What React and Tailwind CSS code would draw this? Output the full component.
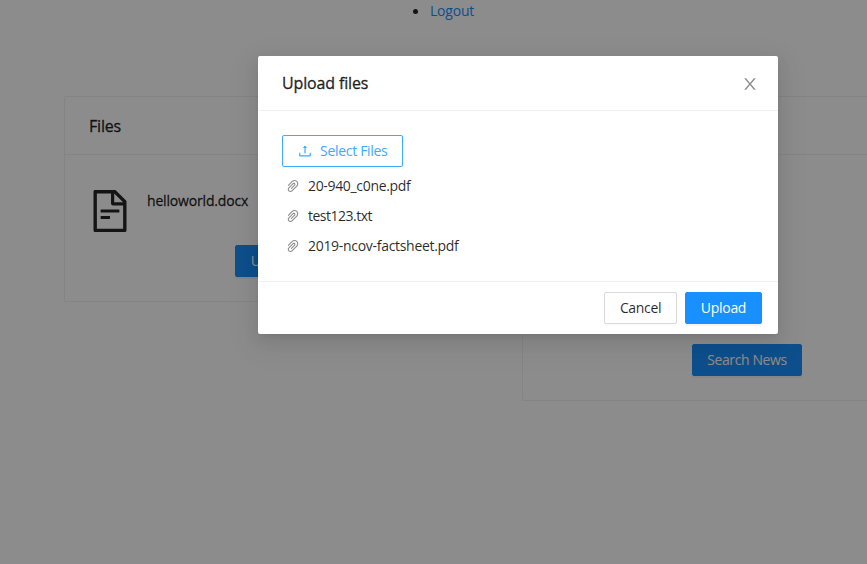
import React from "react";
import {
  AiOutlineUpload,
  AiOutlinePaperClip,
  AiOutlineFileText,
} from "react-icons/ai";

const files = [
  { name: "20-940_c0ne.pdf", spacing: "tracking-[-0.33px]" },
  { name: "test123.txt", spacing: "tracking-[-0.5px]" },
  { name: "2019-ncov-factsheet.pdf", spacing: "tracking-[-0.3px]" },
];

function CloseIcon({ className }) {
  return (
    <svg viewBox="64 64 896 896" className={className} fill="currentColor">
      <path d="M563.8 512l262.5-312.9c4.4-5.2.7-13.1-6.1-13.1h-79.8c-4.7 0-9.2 2.1-12.3 5.7L511.6 449.8 295.1 191.7c-3-3.6-7.5-5.7-12.3-5.7H203c-6.8 0-10.5 7.9-6.1 13.1L459.4 512 196.9 824.9A7.95 7.95 0 0 0 203 838h79.8c4.7 0 9.2-2.1 12.3-5.7l216.5-258.1 216.5 258.1c3 3.6 7.5 5.7 12.3 5.7h79.8c6.8 0 10.5-7.9 6.1-13.1L563.8 512z" />
    </svg>
  );
}

function Button({ primary, className = "", children }) {
  const tone = primary
    ? "border-[#1890ff] bg-[#1890ff] text-white shadow-[0_2px_0_rgba(0,0,0,0.045)]"
    : "border-[#d9d9d9] bg-white text-black/85 shadow-[0_2px_0_rgba(0,0,0,0.016)]";
  return (
    <button
      className={`flex h-8 items-center justify-center rounded-[2px] border whitespace-nowrap ${tone} ${className}`}
    >
      {children}
    </button>
  );
}

function Card({ title, className, children }) {
  return (
    <section className={`flex shrink-0 flex-col rounded-[2px] border border-[#f0f0f0] ${className}`}>
      <h2 className="flex h-[58px] items-center border-b border-[#f0f0f0] px-6 text-[16px] tracking-[-0.2px] [-webkit-text-stroke:0.35px]">
        {title}
      </h2>
      {children}
    </section>
  );
}

function Modal() {
  return (
    <div className="flex h-[278px] w-[520px] flex-col rounded-[2px] bg-white shadow-[0_3px_6px_-4px_rgba(0,0,0,0.12),0_6px_16px_0_rgba(0,0,0,0.08),0_9px_28px_8px_rgba(0,0,0,0.05)]">
      <header className="flex h-[55px] items-center justify-between border-b border-[#f0f0f0] pr-5 pl-6">
        <h1 className="text-[16px] tracking-[-0.15px] [-webkit-text-stroke:0.35px]">Upload files</h1>
        <CloseIcon className="mt-0.5 size-4 text-black/45" />
      </header>
      <div className="flex-1 px-6 pt-6">
        <button className="flex h-8 w-[121px] items-center rounded-[2px] border border-[#40a9ff] pl-3.5 whitespace-nowrap text-[#40a9ff]">
          <AiOutlineUpload className="mr-[7px] size-4 shrink-0" />
          <span className="tracking-[-0.3px]">Select Files</span>
        </button>
        <ul>
          {files.map((f) => (
            <li key={f.name} className="mt-2 flex h-[22px] items-center pl-[3px]">
              <AiOutlinePaperClip className="mr-[7px] size-4 shrink-0 text-black/45" />
              <span className={f.spacing}>{f.name}</span>
            </li>
          ))}
        </ul>
      </div>
      <footer className="flex h-[53px] items-center justify-end gap-2 border-t border-[#f0f0f0] px-4">
        <Button className="w-[73px] tracking-[-0.35px]">Cancel</Button>
        <Button primary className="w-[77px] tracking-[-0.3px]">Upload</Button>
      </footer>
    </div>
  );
}

export default function App() {
  return (
    <div className="relative h-[564px] w-[867px] overflow-hidden bg-white font-['Open_Sans','Noto_Sans',sans-serif] text-[14px] leading-[22px] text-black/85">
      <div className="flex h-full flex-col">
        <nav className="flex h-[22px] items-center pl-[413px]">
          <span className="mr-3 size-[5px] rounded-full bg-black/85" />
          <a className="tracking-[-0.2px] text-[#1890ff]">Logout</a>
        </nav>
        <main className="mt-[74px] flex items-start gap-[39px] pl-16">
          <Card title="Files" className="h-[206px] w-[419px]">
            <div className="flex px-[21px] pt-8">
              <AiOutlineFileText className="size-12" />
              <span className="mt-[3px] ml-[13px] tracking-[-0.17px] [-webkit-text-stroke:0.3px]">helloworld.docx</span>
            </div>
            <div className="mt-[10px] flex justify-center">
              <Button primary className="w-[77px] tracking-[-0.3px]">Upload</Button>
            </div>
          </Card>
          <Card title="News" className="h-[305px] w-[450px]">
            <div className="flex flex-1 items-end justify-center pb-6">
              <Button primary className="w-[110px] tracking-[-0.4px]">Search News</Button>
            </div>
          </Card>
        </main>
      </div>
      <div className="absolute inset-0 bg-black/45 pt-14 pl-[258px]">
        <Modal />
      </div>
    </div>
  );
}
